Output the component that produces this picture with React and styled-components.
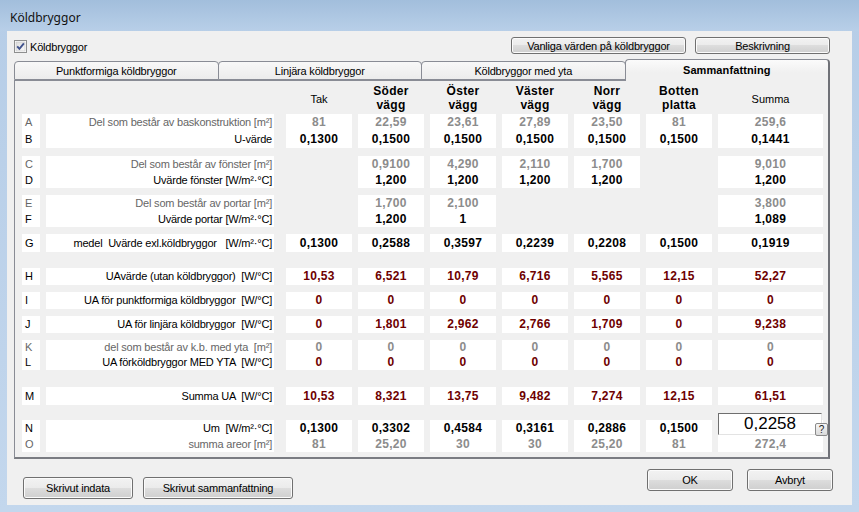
import React from 'react';
import styled, { createGlobalStyle } from 'styled-components';

const tones = { g: '#8c8c8c', k: '#000000', r: '#6e0000' };
const labelTones = { g: '#666666', k: '#000000', r: '#000000' };

const columns = [
  { title: ['Tak'] },
  { title: ['Söder', 'vägg'], bold: true },
  { title: ['Öster', 'vägg'], bold: true },
  { title: ['Väster', 'vägg'], bold: true },
  { title: ['Norr', 'vägg'], bold: true },
  { title: ['Botten', 'platta'], bold: true },
  { title: ['Summa'] },
];

const groups = [
  {
    mt: 2, lh: 17, rows: [
      { l: 'A', label: 'Del som består av baskonstruktion [m²]', tone: 'g', v: ['81', '22,59', '23,61', '27,89', '23,50', '81', '259,6'] },
      { l: 'B', label: 'U-värde', tone: 'k', v: ['0,1300', '0,1500', '0,1500', '0,1500', '0,1500', '0,1500', '0,1441'] },
    ],
  },
  {
    mt: 8, lh: 16, rows: [
      { l: 'C', label: 'Del som består av fönster [m²]', tone: 'g', v: ['', '0,9100', '4,290', '2,110', '1,700', '', '9,010'] },
      { l: 'D', label: 'Uvärde fönster [W/m²·°C]', tone: 'k', v: ['', '1,200', '1,200', '1,200', '1,200', '', '1,200'] },
    ],
  },
  {
    mt: 7, lh: 16, rows: [
      { l: 'E', label: 'Del som består av portar [m²]', tone: 'g', v: ['', '1,700', '2,100', '', '', '', '3,800'] },
      { l: 'F', label: 'Uvärde portar [W/m²·°C]', tone: 'k', v: ['', '1,200', '1', '', '', '', '1,089'] },
    ],
  },
  {
    mt: 7, lh: 18, rows: [
      { l: 'G', label: 'medel  Uvärde exl.köldbryggor   [W/m²·°C]', tone: 'k', v: ['0,1300', '0,2588', '0,3597', '0,2239', '0,2208', '0,1500', '0,1919'] },
    ],
  },
  {
    mt: 16, lh: 17, rows: [
      { l: 'H', label: 'UAvärde (utan köldbryggor)  [W/°C]', tone: 'r', v: ['10,53', '6,521', '10,79', '6,716', '5,565', '12,15', '52,27'] },
    ],
  },
  {
    mt: 7, lh: 17, rows: [
      { l: 'I', label: 'UA för punktformiga köldbryggor  [W/°C]', tone: 'r', v: ['0', '0', '0', '0', '0', '0', '0'] },
    ],
  },
  {
    mt: 7, lh: 17, rows: [
      { l: 'J', label: 'UA för linjära köldbryggor  [W/°C]', tone: 'r', v: ['0', '1,801', '2,962', '2,766', '1,709', '0', '9,238'] },
    ],
  },
  {
    mt: 7, lh: 15, rows: [
      { l: 'K', label: 'del som består av k.b. med yta  [m²]', tone: 'g', v: ['0', '0', '0', '0', '0', '0', '0'] },
      { l: 'L', label: 'UA förköldbryggor MED YTA  [W/°C]', tone: 'r', v: ['0', '0', '0', '0', '0', '0', '0'] },
    ],
  },
  {
    mt: 17, lh: 18, rows: [
      { l: 'M', label: 'Summa UA  [W/°C]', tone: 'r', v: ['10,53', '8,321', '13,75', '9,482', '7,274', '12,15', '61,51'] },
    ],
  },
  {
    mt: 15, lh: 16, rows: [
      { l: 'N', label: 'Um  [W/m²·°C]', tone: 'k', v: ['0,1300', '0,3302', '0,4584', '0,3161', '0,2886', '0,1500', { input: '0,2258' }] },
      { l: 'O', label: 'summa areor [m²]', tone: 'g', v: ['81', '25,20', '30', '30', '25,20', '81', '272,4'] },
    ],
  },
];

const CheckIcon = () => (
  <svg width="13" height="13" viewBox="0 0 13 13">
    <defs>
      <linearGradient id="cb" x1="0" y1="0" x2="1" y2="1">
        <stop offset="0" stopColor="#dcdcdc" />
        <stop offset="1" stopColor="#fbfbfb" />
      </linearGradient>
    </defs>
    <rect x="0.5" y="0.5" width="12" height="12" fill="#fff" stroke="#8e8f8f" />
    <rect x="2" y="2" width="9" height="9" fill="url(#cb)" stroke="#c4c4c4" strokeWidth="0.6" />
    <path d="M3.2 6.4 L5.4 8.9 L9.9 3.4" fill="none" stroke="#40528c" strokeWidth="1.9" />
  </svg>
);

const App = () => {
  return (
    <Window>
      <GlobalStyle />
      <TitleBar>Köldbryggor</TitleBar>
      <Body>
        <TopRow>
          <CheckLabel>
            <CheckIcon />
            <span>Köldbryggor</span>
          </CheckLabel>
          <ButtonGroup $gap={9}>
            <Button $w={175} $h={17}>Vanliga värden på köldbryggor</Button>
            <Button $w={135} $h={17}>Beskrivning</Button>
          </ButtonGroup>
        </TopRow>

        <TabRow>
          <Tab>Punktformiga köldbryggor</Tab>
          <Tab>Linjära köldbryggor</Tab>
          <Tab>Köldbryggor med yta</Tab>
          <Tab $active>Sammanfattning</Tab>
        </TabRow>

        <Panel>
          <HeaderGrid>
            <span />
            <span />
            {columns.map((c) => (
              <HeaderCell key={c.title[0]} $bold={c.bold}>
                {c.title.map((t) => (
                  <div key={t}>{t}</div>
                ))}
              </HeaderCell>
            ))}
          </HeaderGrid>

          {groups.map((g, gi) => (
            <GroupGrid key={gi} $mt={g.mt}>
              <LetterCell $lh={g.lh}>
                {g.rows.map((r) => (
                  <Line key={r.l} $lh={g.lh} style={{ color: labelTones[r.tone] }}>{r.l}</Line>
                ))}
              </LetterCell>
              <LabelCell $lh={g.lh}>
                {g.rows.map((r) => (
                  <Line key={r.l} $lh={g.lh} style={{ color: labelTones[r.tone] }}>{r.label}</Line>
                ))}
              </LabelCell>
              {columns.map((c, ci) => {
                const filled = g.rows.some((r) => r.v[ci] !== '');
                return (
                  <ValueCell key={ci} $filled={filled}>
                    {g.rows.map((r) => {
                      const val = r.v[ci];
                      if (val && typeof val === 'object') {
                        return (
                          <React.Fragment key={r.l}>
                            <SumInput>{val.input}</SumInput>
                            <HelpButton>?</HelpButton>
                          </React.Fragment>
                        );
                      }
                      return (
                        <Value key={r.l} $lh={g.lh} $tone={r.tone}>
                          {val || '\u00a0'}
                        </Value>
                      );
                    })}
                  </ValueCell>
                );
              })}
            </GroupGrid>
          ))}
        </Panel>

        <BottomRow>
          <ButtonGroup $gap={10} $end>
            <Button $w={110}>Skrivut indata</Button>
            <Button $w={150}>Skrivut sammanfattning</Button>
          </ButtonGroup>
          <ButtonGroup $gap={14} $top={10}>
            <Button $w={86}>OK</Button>
            <Button $w={86}>Avbryt</Button>
          </ButtonGroup>
        </BottomRow>
      </Body>
    </Window>
  );
};

// Styled components
const GlobalStyle = createGlobalStyle`
  html, body {
    margin: 0;
    padding: 0;
    background: #bfd4eb;
  }
  body {
    font-family: 'Liberation Sans', Arial, sans-serif;
    font-size: 11px;
    color: #000;
  }
`;

const Window = styled.div`
  width: 859px;
  height: 512px;
  display: flex;
  flex-direction: column;
  background: linear-gradient(#b6cde7, #c3d7ed);
  overflow: hidden;
`;

const TitleBar = styled.div`
  height: 31px;
  flex: none;
  box-sizing: border-box;
  padding: 3px 0 0 10px;
  display: flex;
  align-items: center;
  background: linear-gradient(#a2bedc, #b8cfe8);
  font-family: 'Noto Sans', 'Open Sans', sans-serif;
  font-size: 12px;
  color: #111;
`;

const Body = styled.div`
  flex: none;
  height: 474px;
  margin: 0 7px;
  padding: 0 22px 0 7px;
  display: flex;
  flex-direction: column;
  background: #f0f0f0;
`;

const TopRow = styled.div`
  margin-top: 6px;
  height: 17px;
  display: flex;
  align-items: center;
  justify-content: space-between;
`;

const CheckLabel = styled.label`
  display: flex;
  align-items: center;
  gap: 3px;
  margin-top: 2px;
  letter-spacing: -0.2px;
`;

const ButtonGroup = styled.div`
  display: flex;
  gap: ${(p) => p.$gap}px;
  align-self: ${(p) => (p.$end ? 'flex-end' : 'flex-start')};
  margin-bottom: ${(p) => (p.$end ? 6 : 0)}px;
  margin-top: ${(p) => p.$top || 0}px;
`;

const Button = styled.button`
  width: ${(p) => p.$w}px;
  height: ${(p) => p.$h || 22}px;
  padding: 0;
  border: 1px solid #707070;
  border-radius: 3px;
  background: linear-gradient(#f2f2f2 0%, #ebebeb 49%, #dddddd 50%, #cfcfcf 100%);
  box-shadow: inset 0 0 0 1px #fbfbfb;
  font-family: 'Liberation Sans', Arial, sans-serif;
  font-size: 11px;
  letter-spacing: -0.2px;
  color: #000;
`;

const TabRow = styled.div`
  margin-top: 5px;
  height: 21px;
  display: flex;
  align-items: flex-end;
  position: relative;
  z-index: 1;
`;

const Tab = styled.div`
  flex: 1;
  margin-left: -1px;
  &:first-child {
    margin-left: 0;
  }
  box-sizing: border-box;
  height: ${(p) => (p.$active ? 22 : 19)}px;
  margin-bottom: ${(p) => (p.$active ? -1 : 0)}px;
  display: flex;
  align-items: center;
  justify-content: center;
  padding-bottom: ${(p) => (p.$active ? 2 : 0)}px;
  border: 1px solid #898c95;
  border-bottom: ${(p) => (p.$active ? 'none' : '1px solid #898c95')};
  border-right: ${(p) => (p.$active ? '2px solid #6f7177' : '1px solid #898c95')};
  border-radius: 4px 4px 0 0;
  background: ${(p) =>
    p.$active ? 'linear-gradient(#fbfbfb, #f0f0f0 60%)' : 'linear-gradient(#f8f8f8, #ececec)'};
  font-size: 11px;
  letter-spacing: ${(p) => (p.$active ? '0.1px' : '-0.2px')};
  font-weight: ${(p) => (p.$active ? 'bold' : 'normal')};
`;

const Panel = styled.div`
  flex: none;
  height: 379px;
  box-sizing: border-box;
  padding: 3px 0 0 7px;
  border: 1px solid #898c95;
  border-right: 2px solid #6f7177;
  border-bottom: 2px solid #7a7c82;
  background: #f0f0f0;
`;

const gridTemplate = `
  display: grid;
  grid-template-columns: 18px 234px repeat(6, 66px) 105px;
  column-gap: 6px;
`;

const HeaderGrid = styled.div`
  ${gridTemplate}
  height: 28px;
`;

const HeaderCell = styled.div`
  display: flex;
  flex-direction: column;
  justify-content: center;
  align-items: center;
  line-height: 14px;
  font-size: ${(p) => (p.$bold ? 12 : 11)}px;
  font-weight: ${(p) => (p.$bold ? 'bold' : 'normal')};
  letter-spacing: ${(p) => (p.$bold ? '0.3px' : '0')};
  padding-top: ${(p) => (p.$bold ? 0 : 2)}px;
`;

const GroupGrid = styled.div`
  ${gridTemplate}
  margin-top: ${(p) => p.$mt}px;
`;

const LetterCell = styled.div`
  background: #fff;
  padding-left: 3px;
`;

const LabelCell = styled.div`
  background: #fff;
  margin-right: 6px;
  padding-right: 2px;
  text-align: right;
  white-space: pre;
  letter-spacing: -0.2px;
`;

const Line = styled.div`
  height: ${(p) => p.$lh}px;
  line-height: ${(p) => p.$lh}px;
`;

const ValueCell = styled.div`
  position: relative;
  background: ${(p) => (p.$filled ? '#fff' : 'transparent')};
  text-align: center;
`;

const Value = styled.div`
  height: ${(p) => p.$lh}px;
  line-height: ${(p) => p.$lh}px;
  font-size: 12px;
  font-weight: bold;
  letter-spacing: 0.3px;
  color: ${(p) => tones[p.$tone]};
`;

const SumInput = styled.div`
  height: 22px;
  margin: -7px 1px 1px 0;
  box-sizing: border-box;
  background: #fff;
  border: 1px solid;
  border-color: #6f6f6f #e3e3e3 #e3e3e3 #6f6f6f;
  font-size: 17px;
  line-height: 19px;
  text-align: center;
`;

const HelpButton = styled.div`
  position: absolute;
  left: 97px;
  top: 3px;
  width: 13px;
  height: 13px;
  box-sizing: border-box;
  border: 1px solid #8a8a8a;
  border-radius: 2px;
  background: linear-gradient(#f6f6f6, #d9d9d9);
  font-size: 10px;
  line-height: 11px;
  text-align: center;
  color: #222;
`;

const BottomRow = styled.div`
  flex: 1;
  display: flex;
  justify-content: space-between;
  padding-left: 9px;
  margin-right: -3px;
`;

export default App;
